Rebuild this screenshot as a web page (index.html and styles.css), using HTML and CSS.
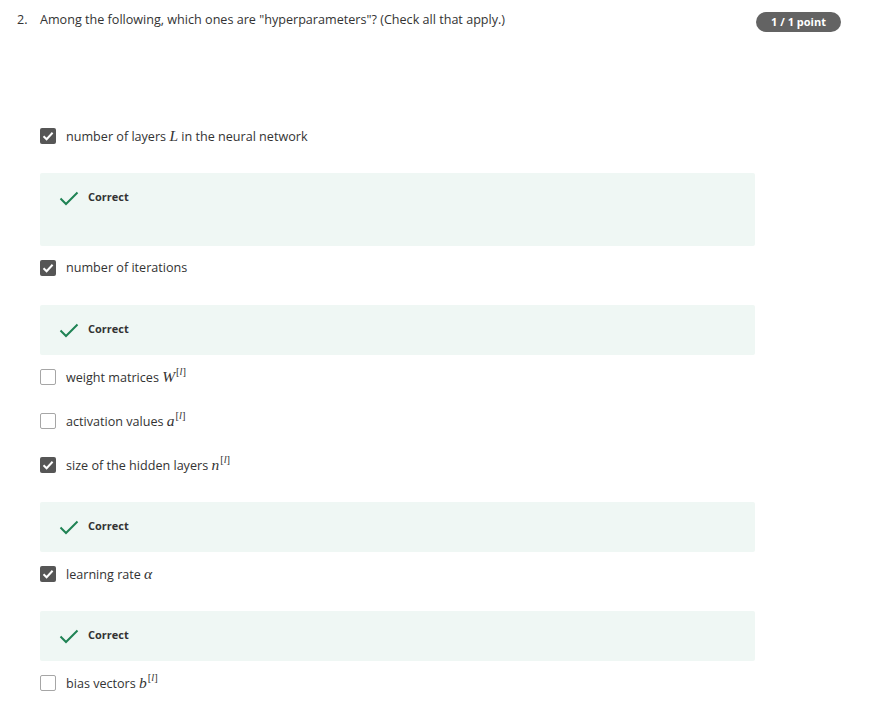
FILE: index.html
```html
<!DOCTYPE html>
<html>
<head>
<meta charset="utf-8">
<link rel="stylesheet" href="styles.css">
</head>
<body>
<div class="page">
  <div class="header">
    <span class="qnum">2.</span>
    <span class="qtext">Among the following, which ones are "hyperparameters"? (Check all that apply.)</span>
    <span class="badge">1 / 1 point</span>
  </div>
  <div class="options">
    <div class="option">
      <div class="row"><span class="box checked"><svg viewBox="0 0 16 16" width="16" height="16"><path d="M3.5 8.2 L6.6 11.2 L12.6 4.8" fill="none" stroke="#fff" stroke-width="2"/></svg></span><span class="label">number of layers <i class="m">L</i> in the neural network</span></div>
      <div class="feedback tall"><svg class="tick" viewBox="0 0 20 16" width="20" height="16"><path d="M1.5 8.5 L7 14 L18.5 2.5" fill="none" stroke="#1f8354" stroke-width="2"/></svg><span class="fb">Correct</span></div>
    </div>
    <div class="option">
      <div class="row"><span class="box checked"><svg viewBox="0 0 16 16" width="16" height="16"><path d="M3.5 8.2 L6.6 11.2 L12.6 4.8" fill="none" stroke="#fff" stroke-width="2"/></svg></span><span class="label">number of iterations</span></div>
      <div class="feedback"><svg class="tick" viewBox="0 0 20 16" width="20" height="16"><path d="M1.5 8.5 L7 14 L18.5 2.5" fill="none" stroke="#1f8354" stroke-width="2"/></svg><span class="fb">Correct</span></div>
    </div>
    <div class="option">
      <div class="row"><span class="box"></span><span class="label">weight matrices <i class="m">W</i><sup class="sup">[<i>l</i>]</sup></span></div>
    </div>
    <div class="option">
      <div class="row"><span class="box"></span><span class="label">activation values <i class="m">a</i><sup class="sup">[<i>l</i>]</sup></span></div>
    </div>
    <div class="option">
      <div class="row"><span class="box checked"><svg viewBox="0 0 16 16" width="16" height="16"><path d="M3.5 8.2 L6.6 11.2 L12.6 4.8" fill="none" stroke="#fff" stroke-width="2"/></svg></span><span class="label">size of the hidden layers <i class="m">n</i><sup class="sup">[<i>l</i>]</sup></span></div>
      <div class="feedback"><svg class="tick" viewBox="0 0 20 16" width="20" height="16"><path d="M1.5 8.5 L7 14 L18.5 2.5" fill="none" stroke="#1f8354" stroke-width="2"/></svg><span class="fb">Correct</span></div>
    </div>
    <div class="option">
      <div class="row"><span class="box checked"><svg viewBox="0 0 16 16" width="16" height="16"><path d="M3.5 8.2 L6.6 11.2 L12.6 4.8" fill="none" stroke="#fff" stroke-width="2"/></svg></span><span class="label">learning rate <i class="m">α</i></span></div>
      <div class="feedback"><svg class="tick" viewBox="0 0 20 16" width="20" height="16"><path d="M1.5 8.5 L7 14 L18.5 2.5" fill="none" stroke="#1f8354" stroke-width="2"/></svg><span class="fb">Correct</span></div>
    </div>
    <div class="option">
      <div class="row"><span class="box"></span><span class="label">bias vectors <i class="m">b</i><sup class="sup">[<i>l</i>]</sup></span></div>
    </div>
  </div>
</div>
</body>
</html>
```
FILE: styles.css
```css
html, body {
  margin: 0;
  padding: 0;
  background: #fff;
}
body {
  font-family: "Open Sans", "Liberation Sans", sans-serif;
  color: #333;
  font-size: 12.6px;
}
.page {
  padding: 10px 30px 0 17px;
}
.header {
  display: flex;
  align-items: flex-start;
  line-height: 20px;
}
.qnum {
  width: 23px;
  flex: none;
}
.qtext {
  flex: 1;
}
.badge {
  flex: none;
  margin-top: 2px;
  width: 85px;
  height: 20px;
  border-radius: 10px;
  background: #636363;
  color: #fff;
  font-weight: 700;
  font-size: 11px;
  line-height: 20px;
  text-align: center;
}
.options {
  margin-top: 82px;
  padding-left: 23px;
  width: 715px;
}
.option {
  padding: 12px 0;
}
.row {
  display: flex;
  align-items: center;
  height: 20px;
  line-height: 20px;
}
.box {
  flex: none;
  width: 16px;
  height: 16px;
  box-sizing: border-box;
  border: 1px solid #a6a6a6;
  border-radius: 2px;
  background: #fff;
  margin-right: 10px;
  display: flex;
}
.box.checked {
  border: none;
  background: #565656;
}
.label {
  white-space: nowrap;
}
.m {
  font-family: "Liberation Serif", "DejaVu Serif", serif;
  font-style: italic;
  font-size: 15.5px;
}
.sup {
  font-family: "Liberation Serif", "DejaVu Serif", serif;
  font-size: 10.5px;
  vertical-align: 7px;
  line-height: 0;
  margin-left: 1px;
}
.feedback {
  margin-top: 27px;
  margin-bottom: -12px;
  height: 50px;
  background: #eff7f4;
  border-radius: 2px;
  display: flex;
  align-items: flex-start;
  padding: 17px 0 0 19px;
  box-sizing: border-box;
}
.feedback.tall {
  height: 73px;
}
.tick {
  flex: none;
  margin-right: 9px;
}
.fb {
  font-weight: 700;
  font-size: 11px;
  line-height: 14px;
  color: #333;
}
```
